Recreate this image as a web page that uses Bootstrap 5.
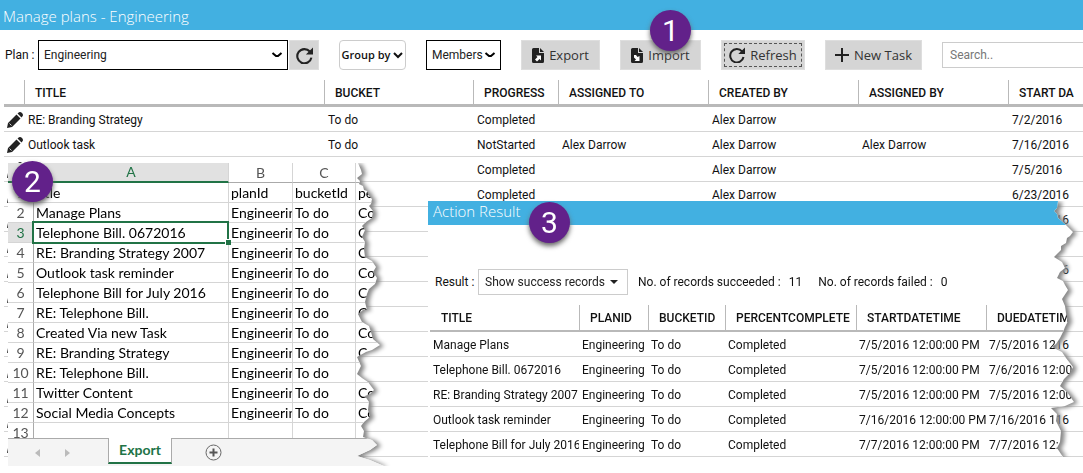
<!DOCTYPE html>
<html lang="en">
<head>
<meta charset="utf-8">
<meta name="viewport" content="width=device-width, initial-scale=1">
<title>Manage plans - Engineering</title>
<link href="https://cdn.jsdelivr.net/npm/bootstrap@5.3.0/dist/css/bootstrap.min.css" rel="stylesheet">
<style>
  body { font-family: Roboto, "Open Sans", sans-serif; font-size: 12px; line-height: 16px; color: #111; background: #fff; }
  .workspace { min-height: 100vh; }
  .titlebar { background: #42b0e1; color: #fff; font-family: "Open Sans", sans-serif; font-weight: 300; font-size: 15px; line-height: 20px; height: 30px; padding: 6px 3px 4px; margin: 0; }
  .toolbar { height: 50px; padding-left: 5px; gap: 20px; }
  .plan-label { width: 33px; white-space: nowrap; }
  .tool { background: #d5d5d5; border: 1px solid #dedede; border-radius: 0; height: 30px; padding: 0; font-family: "Open Sans", sans-serif; font-size: 13px; line-height: 20px; color: #333; gap: 5px; }
  .tool:hover { background: #c8c8c8; }
  .pick { border: 1px solid #000; height: 30px; font-size: 12px; padding: 0 5px; appearance: none; border-radius: 0; color: #222;
    background: #fff url("data:image/svg+xml,%3Csvg xmlns='http://www.w3.org/2000/svg' width='12' height='8'%3E%3Cpath d='M1.500 2L5 5H7L10.500 2' fill='none' stroke='%23000' stroke-width='2'/%3E%3C/svg%3E") no-repeat right 4px center; }
  .pick-plan { width: 250px; }
  .pick-members { width: 75px; }
  .group-by { width: 67px; height: 30px; border: 1px solid #ccc; border-radius: 4px; background: #fff; font-family: "Open Sans", sans-serif; font-size: 11px; font-weight: 600; padding: 0; gap: 3px; color: #111; }
  .w-reload { width: 30px; margin-left: 1px; } .w-export { width: 79px; } .w-import { width: 81px; } .w-refresh { width: 84px; } .w-new { width: 97px; }
  .focused { outline: 1px dashed #555; outline-offset: -4px; }
  .search { width: 200px; height: 26px; border: 1px solid #ccc; padding: 0 7px; font-size: 12px; }
  .search::placeholder { color: #777; }

  .grid { table-layout: fixed; width: 100%; border-collapse: separate; border-spacing: 0; white-space: nowrap; }
  .grid th, .grid td { overflow: hidden; padding: 1px 0 0 4px; }
  .grid th { height: 27px; border-bottom: 3px solid #b9b9b9; padding-left: 11px; font-weight: 500; position: relative; }
  .grid th + th::before { content: ""; position: absolute; left: 0; top: 0; bottom: 0; border-left: 1px solid #b9b9b9; }
  .grid td { height: 25px; border-bottom: 1px solid #d5d5d5; }
  .grid .pen { padding-left: 3px; }
  .grid .pen svg { display: block; }

  .step { position: absolute; z-index: 3; width: 41px; height: 41px; border-radius: 50%; background: #62218a; color: #fff; font: 30px/41px Roboto, sans-serif; text-align: center; box-shadow: 0 3px 5px #666; }
  .step-1 { left: 29px; top: -31px; }
  .step-2 { left: 4px; top: -2px; }
  .step-3 { left: 101px; top: 1px; }
  .torn { filter: drop-shadow(4px 1px 2px #888); clip-path: inset(0 -12px 0 0); }

  .sheet-window { left: 8px; top: 163px; width: 376px; font-family: Lato, "Open Sans", sans-serif; font-size: 14px; line-height: 18px; color: #000; }
  .sheet-body { background: #fff; clip-path: polygon(0 0, 350px 0, 353px 7px, 354px 11px, 349px 15px, 352px 18px, 351px 21px, 355px 23px, 356px 27px, 359px 28px, 361px 33px, 364px 36px, 363px 41px, 361px 43px, 365px 48px, 364px 55px, 358px 59px, 354px 63px, 357px 67px, 354px 74px, 357px 79px, 356px 86px, 357px 94px, 364px 98px, 368px 104px, 365px 109px, 369px 115px, 367px 121px, 361px 126px, 359px 131px, 357px 139px, 359px 147px, 355px 147px, 350px 151px, 354px 159px, 361px 163px, 363px 169px, 365px 176px, 372px 182px, 364px 187px, 358px 189px, 349px 194px, 353px 203px, 349px 211px, 354px 215px, 360px 219px, 366px 227px, 362px 231px, 357px 233px, 361px 239px, 360px 247px, 362px 254px, 356px 259px, 353px 263px, 356px 268px, 355px 274px, 364px 277px, 369px 282px, 362px 287px, 349px 293px, 362px 297px, 376px 303px, 0 303px); }
  .sheet { table-layout: fixed; width: 100%; border-collapse: separate; border-spacing: 0; white-space: nowrap; }
  .sheet th, .sheet td { height: 20px; padding: 0 0 0 2px; overflow: hidden; border-right: 1px solid #d5d5d5; border-bottom: 1px solid #d5d5d5; font-weight: 400; }
  .sheet th { text-align: center; color: #555; padding: 0; border-right-color: #aaa; }
  .sheet thead th { border-bottom: 1px solid #aaa; border-right-color: #d5d5d5; }
  .sheet th.on { background: #e1e1e1; color: #217346; }
  .sheet thead th.on { border-bottom: 2px solid #217346; }
  .sheet td.picked { position: relative; overflow: visible; }
  .picked::before { content: ""; position: absolute; inset: -2px -1px -2px -2px; border: 2px solid #217346; }
  .picked::after { content: ""; position: absolute; right: -3px; bottom: -3px; width: 6px; height: 6px; background: #217346; border: 1px solid #fff; border-width: 1px 0 0 1px; }
  .sheet .last-row th, .sheet .last-row td { height: 15px; line-height: 15px; border-bottom: 0; }
  .sheet .last-row div { height: 15px; line-height: 20px; overflow: hidden; }
  .tabs-bar { height: 28px; background: #f4f4f4; border-top: 1px solid #aaa; padding-left: 27px; }
  .tab-button { width: 64px; height: 26px; margin: -1px 33px 0 37px; background: #fff; border: 1px solid #aaa; border-width: 0 1px 2px; border-bottom-color: #217346; color: #217346; font: 700 14px/20px Lato, sans-serif; padding: 0; }
  .plain-button { border: 0; background: none; padding: 0; line-height: 0; }

  .result-window { left: 428px; top: 201px; width: 648px; }
  .result-body { background: #fff; height: 256px; clip-path: polygon(0 0, 630px 0, 629px 7px, 626px 10px, 629px 13px, 630px 17px, 638px 24px, 645px 31px, 642px 35px, 639px 37px, 638px 42px, 633px 45px, 633px 49px, 630px 52px, 626px 56px, 634px 61px, 637px 67px, 632px 71px, 629px 77px, 635px 80px, 637px 84px, 640px 89px, 636px 95px, 634px 98px, 637px 105px, 638px 112px, 640px 120px, 637px 126px, 635px 131px, 632px 137px, 628px 143px, 624px 146px, 634px 151px, 638px 157px, 645px 166px, 642px 172px, 636px 178px, 632px 185px, 639px 191px, 646px 201px, 637px 205px, 623px 207px, 629px 213px, 628px 220px, 633px 230px, 632px 241px, 629px 247px, 635px 256px, 0 256px); }
  .result-title { background: #42b0e1; color: #fff; font-family: "Open Sans", sans-serif; font-weight: 300; font-size: 15px; height: 24px; line-height: 20px; padding-left: 5px; margin: 0; }
  .result-filter { margin-top: 44px; height: 26px; padding-left: 7px; white-space: nowrap; }
  .result-label { width: 43px; }
  .pick-result { width: 150px; height: 26px; border: 1px solid #ccc; appearance: none; font-size: 12px; padding: 0 6px; color: #222;
    background: #fff url("data:image/svg+xml,%3Csvg xmlns='http://www.w3.org/2000/svg' width='8' height='5'%3E%3Cpath d='M0 0H8L4 4Z' fill='%23222'/%3E%3C/svg%3E") no-repeat right 9px center; }
  .tally { margin-left: 10px; }
  .result-table { margin: 10px 0 0 2px; width: 646px; }
  .result-table th { height: 27px; border-bottom-width: 2px; }
  .result-table td { padding-left: 3px; }
</style>
</head>
<body>
<svg width="0" height="0" class="position-absolute" aria-hidden="true">
  <symbol id="pencil" viewBox="0 0 16 16"><path d="M0 16l1-5L9.500 2.500l4 4L5 15zM10.500 1.500L12 .3q1.500-.7 3 .7t.7 3L14.500 5.500z" fill="#222"/><path d="M2.500 11.500l2 2" stroke="#fff" stroke-width=".8"/></symbol>
  <symbol id="reload" viewBox="0 0 16 16"><path d="M13 4.300A6.700 6.700 0 1 0 14.500 10" fill="none" stroke="#222" stroke-width="2"/><path d="M16 .5V7H9.300z" fill="#222"/></symbol>
  <symbol id="chev" viewBox="0 0 10 8"><path d="M1 2l4 4 4-4" fill="none" stroke="#111" stroke-width="2"/></symbol>
  <symbol id="sheet-out" viewBox="0 0 12 15"><path d="M1.500 0H7v5h5v8.500Q12 15 10.500 15h-9Q0 15 0 13.500v-12Q0 0 1.500 0zM8 0l4 4H8z" fill="#222"/><path d="M4 7.500h5v5L7.500 11 5 13.500 3 11.500 5.500 9z" fill="#fff"/></symbol>
  <symbol id="sheet-in" viewBox="0 0 12 15"><path d="M1.500 0H7v5h5v8.500Q12 15 10.500 15h-9Q0 15 0 13.500v-12Q0 0 1.500 0zM8 0l4 4H8z" fill="#222"/><path d="M3 7l2 0 1.500 2L8.500 8v5h-5L5 11.500 3 9.500z" fill="#fff"/></symbol>
</svg>

<main class="workspace position-relative overflow-hidden">
  <h1 class="titlebar">Manage plans - Engineering</h1>

  <div class="toolbar d-flex align-items-center">
    <div class="d-flex align-items-center flex-shrink-0">
      <label for="plan" class="plan-label">Plan :</label>
      <select id="plan" class="pick pick-plan"><option>Engineering</option></select>
      <button class="tool btn w-reload d-flex align-items-center justify-content-center" aria-label="Reload plans"><svg width="17" height="17"><use href="#reload"/></svg></button>
    </div>
    <button class="group-by d-flex align-items-center justify-content-center flex-shrink-0">Group by<svg width="10" height="8"><use href="#chev"/></svg></button>
    <select class="pick pick-members flex-shrink-0" aria-label="Members"><option>Members</option></select>
    <button class="tool btn w-export d-flex align-items-center justify-content-center flex-shrink-0"><svg width="12" height="15"><use href="#sheet-out"/></svg>Export</button>
    <button class="tool btn w-import d-flex align-items-center justify-content-center flex-shrink-0 position-relative"><svg width="12" height="15"><use href="#sheet-in"/></svg>Import<span class="step step-1">1</span></button>
    <button class="tool btn w-refresh focused d-flex align-items-center justify-content-center flex-shrink-0"><svg width="16" height="16"><use href="#reload"/></svg>Refresh</button>
    <button class="tool btn w-new d-flex align-items-center justify-content-center flex-shrink-0"><svg width="14" height="14"><path d="M7 0v14M0 7h14" stroke="#222" stroke-width="2"/></svg>New Task</button>
    <input class="search flex-shrink-0" type="text" placeholder="Search.." aria-label="Search">
  </div>

  <div class="ps-1">
    <table class="grid">
      <colgroup><col style="width:20px"><col style="width:300px"><col style="width:149px"><col style="width:85px"><col style="width:150px"><col style="width:150px"><col style="width:150px"><col></colgroup>
      <thead><tr><th></th><th>TITLE</th><th>BUCKET</th><th>PROGRESS</th><th>ASSIGNED TO</th><th>CREATED BY</th><th>ASSIGNED BY</th><th>START DA</th></tr></thead>
      <tbody>
        <tr><td class="pen"><svg width="16" height="16"><use href="#pencil"/></svg></td><td>RE: Branding Strategy</td><td>To do</td><td>Completed</td><td></td><td>Alex Darrow</td><td></td><td>7/2/2016</td></tr>
        <tr><td class="pen"><svg width="16" height="16"><use href="#pencil"/></svg></td><td>Outlook task</td><td>To do</td><td>NotStarted</td><td>Alex Darrow</td><td>Alex Darrow</td><td>Alex Darrow</td><td>7/16/2016</td></tr>
        <tr><td class="pen"><svg width="16" height="16"><use href="#pencil"/></svg></td><td></td><td></td><td>Completed</td><td></td><td>Alex Darrow</td><td></td><td>7/5/2016</td></tr>
        <tr><td class="pen"><svg width="16" height="16"><use href="#pencil"/></svg></td><td></td><td></td><td>Completed</td><td></td><td>Alex Darrow</td><td></td><td>6/23/2016</td></tr>
        <tr><td class="pen"><svg width="16" height="16"><use href="#pencil"/></svg></td><td></td><td></td><td></td><td></td><td></td><td></td><td>7/16/2016</td></tr>
        <tr><td class="pen"><svg width="16" height="16"><use href="#pencil"/></svg></td><td></td><td></td><td></td><td></td><td></td><td></td><td></td></tr>
        <tr><td class="pen"><svg width="16" height="16"><use href="#pencil"/></svg></td><td></td><td></td><td></td><td></td><td></td><td></td><td>7/16/2016</td></tr>
        <tr><td class="pen"><svg width="16" height="16"><use href="#pencil"/></svg></td><td></td><td></td><td></td><td></td><td></td><td></td><td></td></tr>
        <tr><td class="pen"><svg width="16" height="16"><use href="#pencil"/></svg></td><td></td><td></td><td></td><td></td><td></td><td></td><td></td></tr>
        <tr><td class="pen"><svg width="16" height="16"><use href="#pencil"/></svg></td><td></td><td></td><td></td><td></td><td></td><td></td><td>7/16/2016</td></tr>
        <tr><td class="pen"><svg width="16" height="16"><use href="#pencil"/></svg></td><td></td><td></td><td></td><td></td><td></td><td></td><td></td></tr>
        <tr><td class="pen"><svg width="16" height="16"><use href="#pencil"/></svg></td><td></td><td></td><td></td><td></td><td></td><td></td><td></td></tr>
        <tr><td class="pen"><svg width="16" height="16"><use href="#pencil"/></svg></td><td></td><td></td><td></td><td></td><td></td><td></td><td>7/16/2016</td></tr>
        <tr><td class="pen"><svg width="16" height="16"><use href="#pencil"/></svg></td><td></td><td></td><td></td><td></td><td></td><td></td><td></td></tr>
      </tbody>
    </table>
  </div>

  <section class="sheet-window position-absolute" aria-label="Exported sheet">
    <span class="step step-2">2</span>
    <div class="torn"><div class="sheet-body">
      <table class="sheet">
        <colgroup><col style="width:26px"><col style="width:195px"><col style="width:64px"><col style="width:63px"><col></colgroup>
        <thead><tr><th class="on"></th><th class="on">A</th><th>B</th><th>C</th><th></th></tr></thead>
        <tbody>
          <tr><th>1</th><td>title</td><td>planId</td><td>bucketId</td><td>per</td></tr>
          <tr><th>2</th><td>Manage Plans</td><td>Engineering</td><td>To do</td><td>Co</td></tr>
          <tr><th class="on">3</th><td class="picked">Telephone Bill. 0672016</td><td>Engineering</td><td>To do</td><td>Co</td></tr>
          <tr><th>4</th><td>RE: Branding Strategy 2007</td><td>Engineering</td><td>To do</td><td>Co</td></tr>
          <tr><th>5</th><td>Outlook task reminder</td><td>Engineering</td><td>To do</td><td>Co</td></tr>
          <tr><th>6</th><td>Telephone Bill for July 2016</td><td>Engineering</td><td>To do</td><td>Co</td></tr>
          <tr><th>7</th><td>RE: Telephone Bill.</td><td>Engineering</td><td>To do</td><td>Co</td></tr>
          <tr><th>8</th><td>Created Via new Task</td><td>Engineering</td><td>To do</td><td>Co</td></tr>
          <tr><th>9</th><td>RE: Branding Strategy</td><td>Engineering</td><td>To do</td><td>Co</td></tr>
          <tr><th>10</th><td>RE: Telephone Bill.</td><td>Engineering</td><td>To do</td><td></td></tr>
          <tr><th>11</th><td>Twitter Content</td><td>Engineering</td><td>To do</td><td>Co</td></tr>
          <tr><th>12</th><td>Social Media Concepts</td><td>Engineering</td><td>To do</td><td>Co</td></tr>
          <tr class="last-row"><th><div>13</div></th><td></td><td></td><td></td><td></td></tr>
        </tbody>
      </table>
      <div class="tabs-bar d-flex align-items-start">
        <div class="d-flex align-self-center">
          <button class="plain-button" aria-label="Previous sheet"><svg width="6" height="8"><path d="M5 0v8L0 4z" fill="#bbb"/></svg></button>
          <button class="plain-button ms-4" aria-label="Next sheet"><svg width="6" height="8"><path d="M0 0v8l5-4z" fill="#bbb"/></svg></button>
        </div>
        <button class="tab-button">Export</button>
        <button class="plain-button align-self-center" aria-label="Add sheet"><svg width="17" height="17"><circle cx="8.500" cy="8.500" r="7.500" fill="none" stroke="#666"/><path d="M8.500 4.500v8M4.500 8.500h8" stroke="#555" stroke-width="2"/></svg></button>
      </div>
    </div></div>
  </section>

  <section class="result-window position-absolute" aria-label="Action Result">
    <span class="step step-3">3</span>
    <div class="torn"><div class="result-body">
      <h2 class="result-title">Action Result</h2>
      <div class="result-filter d-flex align-items-center">
        <label for="result" class="result-label">Result :</label>
        <select id="result" class="pick-result"><option>Show success records</option></select>
        <span class="tally">No. of records succeeded :</span><span class="ms-2">11</span>
        <span class="ms-3">No. of records failed :</span><span class="ms-2">0</span>
      </div>
      <table class="grid result-table">
        <colgroup><col style="width:149px"><col style="width:69px"><col style="width:77px"><col style="width:131px"><col style="width:130px"><col></colgroup>
        <thead><tr><th>TITLE</th><th>PLANID</th><th>BUCKETID</th><th>PERCENTCOMPLETE</th><th>STARTDATETIME</th><th>DUEDATETIME</th></tr></thead>
        <tbody>
          <tr><td>Manage Plans</td><td>Engineering</td><td>To do</td><td>Completed</td><td>7/5/2016 12:00:00 PM</td><td>7/5/2016 12</td></tr>
          <tr><td>Telephone Bill. 0672016</td><td>Engineering</td><td>To do</td><td>Completed</td><td>7/5/2016 12:00:00 PM</td><td>7/6/2016 12:00:</td></tr>
          <tr><td>RE: Branding Strategy 2007</td><td>Engineering</td><td>To do</td><td>Completed</td><td>7/5/2016 12:00:00 PM</td><td>7/5/2016 12:00..</td></tr>
          <tr><td>Outlook task reminder</td><td>Engineering</td><td>To do</td><td>Completed</td><td>7/16/2016 12:00:00 PM</td><td>7/16/2016 1</td></tr>
          <tr><td>Telephone Bill for July 2016</td><td>Engineering</td><td>To do</td><td>Completed</td><td>7/7/2016 12:00:00 PM</td><td>7/7/2016 12:</td></tr>
        </tbody>
      </table>
    </div></div>
  </section>
</main>
<script src="https://cdn.jsdelivr.net/npm/bootstrap@5.3.0/dist/js/bootstrap.bundle.min.js"></script>
</body>
</html>
